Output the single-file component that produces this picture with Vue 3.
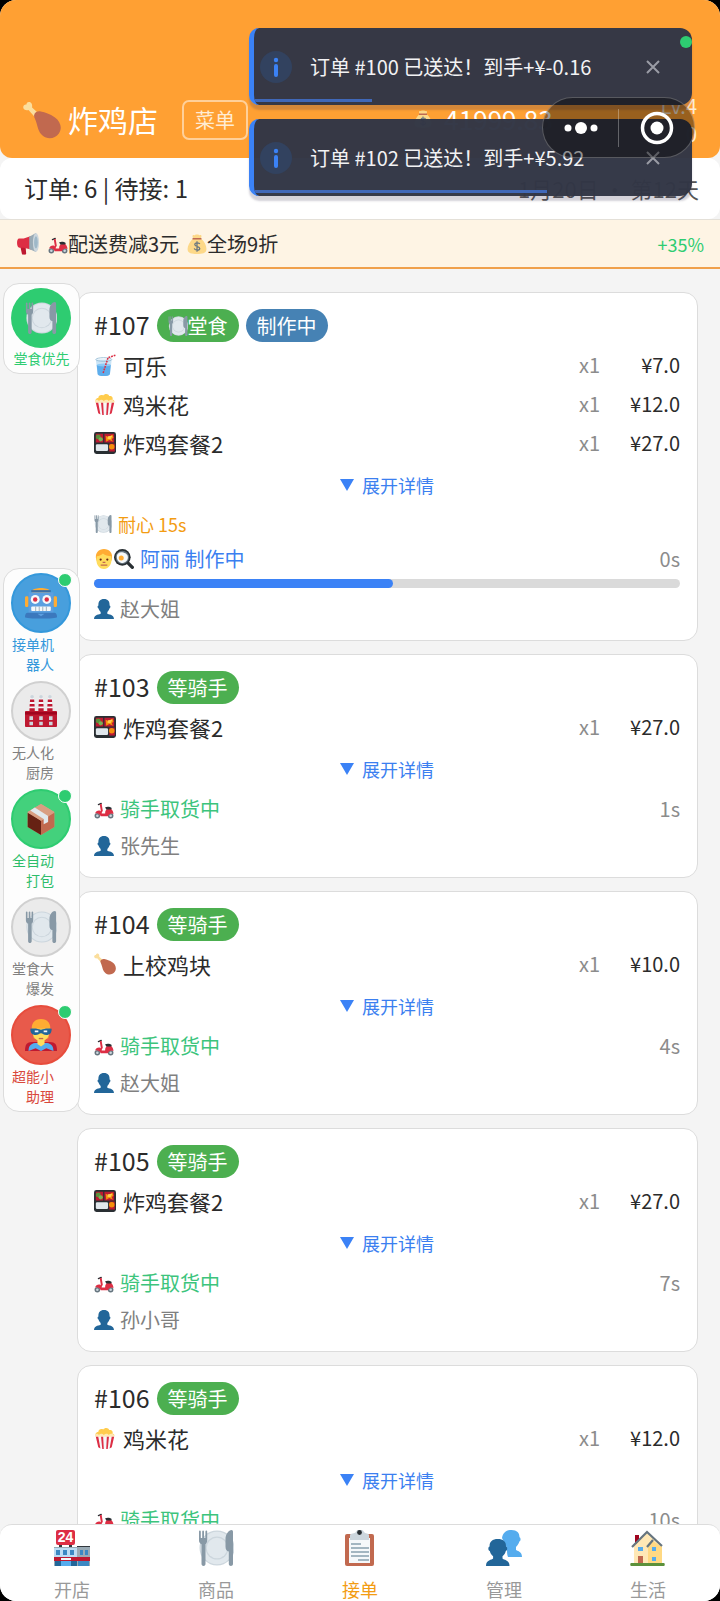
<style>
body {
  background: #000;
}
</style>
<template>
  <div class="screen">
    <svg class="sprite" aria-hidden="true">
      <symbol id="i-drumstick" viewBox="0 0 36 36">
        <path
          fill="#FBDE9D"
          d="M15 12 8.600 6.200C9 4 8.400 1.500 6.300 1 4.200.600 3.200 2 3.300 3.400 1.800 3 .300 4 .200 5.900c0 2.300 2.600 3.400 5 2.700L12 16z"
        />
        <path
          fill="#C1694F"
          d="M10.500 13.500c.400-2.600 3.500-4.300 6.300-3.600 4.400 1 8.600 2.200 13.200 5.400 6 4.200 7.300 10.700 4 15.500-3.400 5-10.700 6.200-15.500 2-4.200-3.700-4.400-8.300-6.500-14.300-.700-1.900-1.700-3.400-1.500-5z"
        />
      </symbol>
      <symbol id="i-plate" viewBox="0 0 36 36">
        <circle cx="19" cy="18" r="17.500" fill="#CCD6DD" />
        <circle cx="19" cy="18" r="16.300" fill="#E1E8ED" />
        <circle cx="19" cy="18" r="11.500" fill="#CCD6DD" />
        <circle cx="19" cy="18" r="10.300" fill="#E1E8ED" />
        <path
          fill="#8899A6"
          d="M1 1.500c0-1.200 1.800-1.200 1.800 0V8h1.400V1.500c0-1.200 1.800-1.200 1.800 0V8h1.400V1.500c0-1.200 1.800-1.200 1.800 0V10c0 2-.600 3.500-1.700 4.200V34c0 2.600-4 2.600-4 0V14.200C1.600 13.500 1 12 1 10zM35 2v32c0 2.600-4.200 2.600-4.200 0V21.500c-2.200-.500-3.300-2-3.300-5V9c0-5 3.500-9 6-9 1 0 1.500.800 1.500 2z"
        />
      </symbol>
      <symbol id="i-megaphone" viewBox="0 0 36 36">
        <path fill="#BE1931" d="M5 20h9l1 14c0 2-7 2-7 0z" />
        <path fill="#DD2E44" d="M3 9h8l12-4v22l-12-3H4c-5 0-5-15-1-15z" />
        <path fill="#99AAB5" d="M20 6 31 0v31l-11-5z" />
        <ellipse cx="31" cy="15.500" rx="5" ry="15.500" fill="#CCD6DD" />
        <ellipse cx="31" cy="15.500" rx="3" ry="10" fill="#9FB8C8" />
      </symbol>
      <symbol id="i-scooter" viewBox="0 0 36 36">
        <circle cx="6" cy="30" r="5" fill="#66757F" />
        <circle cx="6" cy="30" r="2.300" fill="#CCD6DD" />
        <circle cx="30" cy="30" r="5" fill="#66757F" />
        <circle cx="30" cy="30" r="2.300" fill="#CCD6DD" />
        <path fill="none" stroke="#292F33" stroke-width="2.500" stroke-linecap="round" d="m8 10 5-2" />
        <path fill="none" stroke="#DD2E44" stroke-width="3.500" d="m12 9 2 12-3 5" />
        <path
          fill="#DD2E44"
          d="M2 26c1-4 5-6 9-5l3 5h6c0-5 2-8 5-8h6c3 3 4 6 4 9-4-2-8-1-10 4H12c-2-5-6-6-10-5z"
        />
        <path fill="#292F33" d="M20 15c4-2 9-1 12 1l-1 3H22z" />
      </symbol>
      <symbol id="i-money" viewBox="0 0 36 36">
        <path
          fill="#FDD888"
          d="M11 8C9 4 10 1 12 2c2 1 3-2 6-1 3-1 4 2 6 1s3 2 1 6c7 6 10 13 10 19 0 8-8 9-17 9S1 35 1 27C1 21 5 14 11 8z"
        />
        <path fill="#BF6952" d="M10 7h16v3H10z" />
        <path
          fill="none"
          stroke="#67757F"
          stroke-width="2.200"
          d="M23 18c-1-3-9-3-9 1s9 3 9 7-9 4-10 0M18 13v19"
        />
      </symbol>
      <symbol id="i-cup" viewBox="0 0 36 36">
        <path fill="#BDDDF4" d="M3 9h26l-3 24c-1 4-19 4-20 0z" opacity=".8" />
        <path fill="#5DADEC" d="M4.500 18h23L26 33c-1 4-19 4-20 0z" />
        <ellipse cx="16" cy="18" rx="11.500" ry="2.500" fill="#8CCAF7" />
        <ellipse cx="16" cy="9" rx="13" ry="3" fill="none" stroke="#9BBFD6" stroke-width="1.500" />
        <path
          fill="none"
          stroke="#DD2E44"
          stroke-width="2.500"
          stroke-dasharray="3 1.500"
          d="M15 31 23 6l12-4"
        />
      </symbol>
      <symbol id="i-popcorn" viewBox="0 0 36 36">
        <path
          fill="#FFCC4D"
          d="M3 15C1 11 4 8 7 8c0-4 5-6 8-4 3-4 9-3 10 1 4-1 7 3 5 6 4 0 4 4 2 6H4z"
        />
        <path fill="#FFE8B6" d="M2 12c2-2 5-1 6 1 3-3 6-2 8 0 3-3 7-2 8 0 3-3 8-2 9 1 0 3-2 4-4 4H6c-3 0-5-3-4-6z" />
        <path fill="#F5F8FA" d="M3 16h30l-4 17c-1 3-21 3-22 0z" />
        <path fill="#DD2E44" d="M3 16h4l3.500 19L7 33zM11.500 16h3.500l1 20-2.500-.200zM21 16h3.500l-2 19.800-2.500.200zM29 16h4l-4 17-3.500 2z" />
      </symbol>
      <symbol id="i-bento" viewBox="0 0 36 36">
        <rect width="36" height="36" rx="4" fill="#292F33" />
        <path fill="#BE1931" d="M3 3h12v14H3zM17 3h16v14H17z" />
        <circle cx="7" cy="8" r="4" fill="#5C913B" />
        <circle cx="11" cy="12" r="3.500" fill="#77B255" />
        <path fill="#F4900C" d="M19 6l5 2 6-4 2 5-3 3 2 4-6-3-5 3z" />
        <path fill="#FFCC4D" d="m23 7 7-1-3 6-5-1z" />
        <rect x="3" y="20" width="20" height="11" rx="2" fill="#E1E8ED" />
        <path fill="#BE1931" d="M25 19h9v13h-9z" />
        <circle cx="29" cy="24" r="4.500" fill="#F4900C" />
      </symbol>
      <symbol id="i-face" viewBox="0 0 36 36">
        <path fill="#FFAC33" d="M4 19C1 7 9 0 18 0s17 7 14 19c-1 4-3 4-4 1H8c-1 3-3 3-4-1z" />
        <path fill="#FFDC5D" d="M5 13c5 0 9-3 11-5 4 3 9 5 15 5 3 12-4 23-13 23S2 27 5 13z" />
        <path fill="#C1694F" d="M15.500 23h5v2h-5zM12 28h12v2H12z" />
        <circle cx="12" cy="19" r="2" fill="#662113" />
        <circle cx="24" cy="19" r="2" fill="#662113" />
      </symbol>
      <symbol id="i-pan" viewBox="0 0 36 36">
        <path stroke="#292F33" stroke-width="6" stroke-linecap="round" d="m25 25 8 8" />
        <circle cx="15" cy="15" r="15" fill="#292F33" />
        <circle cx="15" cy="15" r="12" fill="#66757F" />
        <path fill="#F5F8FA" d="M5 14c0-6 5-9 10-8s11 4 10 10-6 9-11 9-9-5-9-11z" />
        <circle cx="13" cy="16" r="4.500" fill="#FFAC33" />
      </symbol>
      <symbol id="i-user" viewBox="0 0 36 36">
        <path
          fill="#269"
          d="M24 26.500v-3.300c2.200-1.800 3.700-4.500 4-6.400 1.600 0 2.500-4.800 0-5C28.500 4 25 0 18 0S7.500 4 8 11.800c-2.500.200-1.600 5 0 5 .300 1.900 1.800 4.600 4 6.400v3.300C11 28 0 27 0 36h36c0-9-11-8-12-9.500z"
        />
      </symbol>
      <symbol id="i-robot" viewBox="0 0 36 36">
        <path fill="#FFAC33" d="M8 4c2-4 18-4 20 0v4H8zM0 12c0-2 4-2 4 0v9c0 2-4 2-4 0zM32 12c0-2 4-2 4 0v9c0 2-4 2-4 0z" />
        <path fill="#3B6FA8" d="M7 3.500h22V6H7z" />
        <path fill="#5C9FE0" d="M4 6h28v23H4z" />
        <path fill="#3B78BD" d="M3 29h30c2 0 3 2 3 5 0 2-36 2-36 0 0-3 1-5 3-5z" />
        <circle cx="11.500" cy="14" r="5" fill="#F5F8FA" />
        <circle cx="24.500" cy="14" r="5" fill="#F5F8FA" />
        <circle cx="11.500" cy="14" r="2.500" fill="#DD2E44" />
        <circle cx="24.500" cy="14" r="2.500" fill="#DD2E44" />
        <rect x="7" y="22" width="22" height="5" rx="1" fill="#F5F8FA" />
        <path stroke="#99AAB5" d="M12 22v5M16 22v5M20 22v5M24 22v5" />
        <path fill="#5C9FE0" d="m14 30 4 3 4-3z" />
      </symbol>
      <symbol id="i-factory" viewBox="0 0 36 36">
        <path fill="#F5F8FA" d="M6 3h4l1 15H5zM16 3h4l1 15h-6zM26 3h4l1 15h-6z" />
        <path
          fill="#BE1931"
          d="M5.700 5h4.600l.200 3h-5zM5.300 10h5.400l.200 3H5.100zM5 15h6v3H5zM15.700 5h4.600l.200 3h-5zM15.300 10h5.400l.200 3h-5.800zM15 15h6v3h-6zM25.700 5h4.600l.200 3h-5zM25.300 10h5.400l.200 3h-5.800zM25 15h6v3h-6z"
        />
        <g fill="#CCD6DD">
          <circle cx="8" cy="2" r="2" />
          <circle cx="18" cy="2" r="2" />
          <circle cx="28" cy="2" r="2" />
        </g>
        <rect y="18" width="36" height="18" rx="1" fill="#BE1931" />
        <path fill="#A0041E" d="M0 19h36v3H0z" />
        <path
          fill="#CCD6DD"
          d="M5 24h4v4H5zM16 24h4v4h-4zM27 24h4v4h-4zM5 30h4v4H5zM16 30h4v4h-4zM27 30h4v4h-4z"
        />
      </symbol>
      <symbol id="i-box" viewBox="0 0 36 36">
        <path fill="#D99E82" d="m18 1 15 9v17L18 36 3 27V10z" />
        <path fill="#662113" d="m3 11 15 9v16L3 27z" />
        <path fill="#C1694F" d="M18 20 33 11v16l-15 9z" />
        <path fill="#D99E82" d="M18 1 3 10l15 10 15-10z" />
        <path fill="#E1E8ED" d="m11 5 15 9.500v7l-5 2.500v-6L6 8.500z" />
      </symbol>
      <symbol id="i-hero" viewBox="0 0 36 36">
        <path fill="#BE1931" d="M0 36c0-7 2-10 8-10h20c6 0 8 3 8 10z" />
        <path fill="#55ACEE" d="M4 36c0-7 4-9 9-9h10c5 0 9 2 9 9l-8-3-6 3-6-3z" />
        <path fill="#FFAC33" d="M8 14C6 5 11 0 18 0s12 5 10 14l-2 8H10z" />
        <path fill="#FFDC5D" d="M9 11h18c1 6-1 11-5 13v4l-4 3-4-3v-4c-4-2-6-7-5-13z" />
        <path fill="#226699" d="M6 11c6-1 8 0 12 1 4-1 6-2 12-1 0 5-2 7-6 7-3 0-4-2-6-2s-3 2-6 2c-4 0-6-2-6-7z" />
        <path fill="#F5F8FA" d="M11 13h4v2h-4zM21 13h4v2h-4z" />
        <path stroke="#C1694F" stroke-width="1.500" d="M15.500 22h5" />
      </symbol>
      <symbol id="i-store" viewBox="0 0 36 36">
        <path fill="#31373D" d="M5 13h3v4H5zM15 13h3v4h-3zM23 16h13v3H23z" />
        <rect x="2" width="19" height="15" rx="2" fill="#DD2E44" />
        <text x="11.500" y="12" text-anchor="middle" class="store-sign">24</text>
        <path fill="#99AAB5" d="M0 17h36v19H0z" />
        <path fill="#BDDDF4" d="M0 18h23v9H0z" />
        <path fill="#3B88C3" d="M2 20h4v5H2zM9 20h4v5H9zM16 20h4v5h-4zM26 20h3v5h-3zM31 20h3v5h-3zM24 30h11v6H24z" />
        <path fill="#BE1931" d="M0 27h36v4H0z" />
        <path fill="#F5F8FA" d="M7 28h10v2H7z" />
        <path fill="#55ACEE" d="M1 31h22v5H1z" />
        <path fill="#269" d="M1 31h6v5H1zM17 31h6v5h-6z" />
      </symbol>
      <symbol id="i-clipboard" viewBox="0 0 36 36">
        <rect x="3" y="4" width="29" height="32" rx="2" fill="#C1694F" />
        <path fill="#F5F8FA" d="M7 8h21v25H7z" />
        <path fill="#CCD6DD" d="M8 10V5c0-2 5-1 6-3 1-3 7-3 8 0 1 2 5 1 5 3v5z" />
        <circle cx="17.500" cy="2.500" r="2.400" fill="#292F33" />
        <path stroke="#88A0AE" stroke-width="1.700" d="M9 14h10M9 18h18M9 22h18M9 26h18M16 30h11" />
      </symbol>
      <symbol id="i-users" viewBox="0 0 36 36">
        <path
          fill="#55ACEE"
          d="M30 20v-3c2-2 3-4 3.300-5.500 1.600 0 1.700-4 .200-4.300C33.500 3 31 0 25.500 0S17 3 16 8l5 10c0 4 0 7 1 9h14c0-6-5-6-6-7z"
        />
        <path
          fill="#269"
          d="M16.500 28.500v-2.300c1.900-1.400 3-3.400 3.300-5.200 1.700 0 2-4.200.200-4.500.300-5-3-7.500-8.200-7.500S3.300 11.500 3.600 16.500c-1.800.300-1.500 4.500.200 4.500.300 1.800 1.400 3.800 3.300 5.200v2.300C6 30 0 29.500 0 36h23.500c0-6.500-6-6-7-7.500z"
        />
      </symbol>
      <symbol id="i-house" viewBox="0 0 36 36">
        <path fill="#A0041E" d="M5 5h4v9H5z" />
        <path fill="#FFE8B6" d="M4 16 17 3l15 13v17H4z" />
        <path fill="#FFD983" d="M18 17l5-6 9 6v16H18z" />
        <path fill="none" stroke="#66757F" stroke-width="2.200" d="M2 17 17 2l15 14M17 17l6-7" />
        <path fill="#55ACEE" d="M8 17h5v4H8zM22 17h4v4h-4zM22 27h4v4h-4z" />
        <path fill="#C1694F" d="M8 26h5v7H8z" />
        <path fill="#5C913B" d="M1 33h33c1 0 1 3 0 3H1c-1 0-1-3 0-3z" />
      </symbol>
    </svg>

    <header class="topbar">
      <svg class="shop-icon"><use href="#i-drumstick" /></svg>
      <h1>炸鸡店</h1>
      <button class="menu-btn" type="button">菜单</button>
      <div class="balance">
        <svg class="icon-18"><use href="#i-money" /></svg>
        <span>41999.83</span>
      </div>
      <div class="level">
        <span>Lv.4</span>
        <span>0</span>
      </div>
    </header>

    <section class="summary">
      <span>订单: 6 | 待接: 1</span>
      <span class="date">1月20日 · 第12天</span>
    </section>

    <section class="promo">
      <svg class="icon-24"><use href="#i-megaphone" /></svg>
      <span class="promo-item"><svg class="icon-20"><use href="#i-scooter" /></svg>配送费减3元</span>
      <span class="promo-item"><svg class="icon-20"><use href="#i-money" /></svg>全场9折</span>
      <span class="promo-rate">+35%</span>
    </section>

    <main>
      <div class="order-list">
        <article v-for="order in orders" :key="order.id" class="card">
          <div class="card-head">
            <h2>#{{ order.id }}</h2>
            <span v-if="order.dineIn" class="badge green">
              <svg class="icon-20"><use href="#i-plate" /></svg>堂食
            </span>
            <span class="badge" :class="order.dineIn ? 'blue' : 'green'">{{ order.status }}</span>
          </div>
          <ul class="items">
            <li v-for="item in order.items" :key="item.name">
              <svg class="icon-22"><use :href="`#i-${item.icon}`" /></svg>
              <span class="item-name">{{ item.name }}</span>
              <span class="qty">x1</span>
              <span class="price">{{ formatPrice(item.price) }}</span>
            </li>
          </ul>
          <button class="expand" type="button"><i class="triangle"></i>展开详情</button>
          <template v-if="order.dineIn">
            <div class="row patience">
              <svg class="icon-18"><use href="#i-plate" /></svg>耐心 {{ order.patience }}s
            </div>
            <div class="row cooking">
              <span class="chef">
                <svg class="icon-20"><use href="#i-face" /></svg>
                <svg class="icon-20"><use href="#i-pan" /></svg>
              </span>
              {{ order.chef }} 制作中
              <span class="seconds">{{ order.seconds }}s</span>
            </div>
            <div class="track" role="progressbar" aria-label="制作进度" :aria-valuenow="order.progress">
              <div class="fill" :style="{ width: order.progress + '%' }"></div>
            </div>
          </template>
          <div v-else class="row rider">
            <svg class="icon-20"><use href="#i-scooter" /></svg>骑手取货中
            <span class="seconds">{{ order.seconds }}s</span>
          </div>
          <div class="row customer">
            <svg class="icon-20"><use href="#i-user" /></svg>{{ order.customer }}
          </div>
        </article>
      </div>

      <aside class="panel panel-top">
        <button class="tool tone-green" type="button">
          <span class="disc"><svg class="icon-32"><use href="#i-plate" /></svg></span>
          <span class="tool-label">堂食优先</span>
        </button>
      </aside>
      <aside class="panel panel-tools">
        <button
          v-for="tool in tools"
          :key="tool.icon"
          class="tool two-line"
          :class="`tone-${tool.tone}`"
          type="button"
        >
          <span class="disc"><svg class="icon-32"><use :href="`#i-${tool.icon}`" /></svg></span>
          <span v-if="tool.tone !== 'off'" class="dot"></span>
          <span class="tool-label">{{ tool.label[0] }}<br />{{ tool.label[1] }}</span>
        </button>
      </aside>
    </main>

    <nav>
      <a v-for="tab in tabs" :key="tab.label" href="#" :class="{ active: tab.label === activeTab }">
        <svg class="icon-36"><use :href="`#i-${tab.icon}`" /></svg>
        {{ tab.label }}
      </a>
    </nav>

    <div class="toasts">
      <div v-for="toast in toasts" :key="toast.id" class="toast" role="status">
        <svg class="toast-info" viewBox="0 0 32 32">
          <circle cx="16" cy="16" r="16" fill="#32425f" />
          <circle cx="16" cy="9" r="2.200" fill="#3b82f6" />
          <path stroke="#3b82f6" stroke-width="4" stroke-linecap="round" d="M16 15v9" />
        </svg>
        <span class="toast-text">订单 #{{ toast.id }} 已送达！到手+¥{{ toast.income }}</span>
        <button class="toast-close" type="button" aria-label="关闭">
          <svg viewBox="0 0 14 14"><path d="m1 1 12 12M13 1 1 13" /></svg>
        </button>
        <div class="toast-bar" :style="{ width: toast.left + '%' }"></div>
      </div>
      <span class="online"></span>
    </div>

    <div class="capsule">
      <button type="button" aria-label="更多">
        <svg width="34" height="34" viewBox="0 0 34 34" fill="#fff">
          <circle cx="4" cy="17" r="3.500" />
          <circle cx="17" cy="17" r="6" />
          <circle cx="30" cy="17" r="3.500" />
        </svg>
      </button>
      <button type="button" aria-label="关闭小程序">
        <svg width="34" height="34" viewBox="0 0 34 34">
          <circle cx="17" cy="17" r="14.500" fill="none" stroke="#fff" stroke-width="3.500" />
          <circle cx="17" cy="17" r="6.500" fill="#fff" />
        </svg>
      </button>
    </div>
  </div>
</template>

<script setup>
import { ref } from 'vue'

const combo = { icon: 'bento', name: '炸鸡套餐2', price: 27 }
const popcorn = { icon: 'popcorn', name: '鸡米花', price: 12 }

const orders = ref([
  {
    id: 107,
    dineIn: true,
    status: '制作中',
    items: [{ icon: 'cup', name: '可乐', price: 7 }, popcorn, combo],
    patience: 15,
    chef: '阿丽',
    progress: 51,
    seconds: 0,
    customer: '赵大姐',
  },
  { id: 103, status: '等骑手', items: [combo], seconds: 1, customer: '张先生' },
  {
    id: 104,
    status: '等骑手',
    items: [{ icon: 'drumstick', name: '上校鸡块', price: 10 }],
    seconds: 4,
    customer: '赵大姐',
  },
  { id: 105, status: '等骑手', items: [combo], seconds: 7, customer: '孙小哥' },
  { id: 106, status: '等骑手', items: [popcorn], seconds: 10, customer: '张先生' },
])

const tools = [
  { icon: 'robot', label: ['接单机', '器人'], tone: 'blue' },
  { icon: 'factory', label: ['无人化', '厨房'], tone: 'off' },
  { icon: 'box', label: ['全自动', '打包'], tone: 'mint' },
  { icon: 'plate', label: ['堂食大', '爆发'], tone: 'off' },
  { icon: 'hero', label: ['超能小', '助理'], tone: 'red' },
]

const tabs = [
  { icon: 'store', label: '开店' },
  { icon: 'plate', label: '商品' },
  { icon: 'clipboard', label: '接单' },
  { icon: 'users', label: '管理' },
  { icon: 'house', label: '生活' },
]
const activeTab = ref('接单')

const toasts = ref([
  { id: 100, income: '-0.16', left: 27 },
  { id: 102, income: '5.92', left: 67 },
])

const formatPrice = (value) => `¥${value.toFixed(1)}`
</script>

<style scoped>
.screen {
  position: relative;
  display: flex;
  flex-direction: column;
  height: 100vh;
  overflow: hidden;
  border-radius: 16px;
  background: #f4f4f4;
  color: #2b2b2b;
  font-family: 'Noto Sans CJK SC', 'Noto Sans', sans-serif;
  font-size: 20px;
  line-height: 28px;
}
.sprite {
  display: none;
}
.store-sign {
  font: bold 14px 'Liberation Sans', sans-serif;
  fill: #fff;
}
button {
  padding: 0;
  border: 0;
  background: none;
  color: inherit;
  font: inherit;
}
svg {
  display: block;
  flex: none;
}
.icon-18 {
  width: 18px;
  height: 18px;
}
.icon-20 {
  width: 20px;
  height: 20px;
}
.icon-22 {
  width: 22px;
  height: 22px;
}
.icon-24 {
  width: 24px;
  height: 22px;
}
.icon-32 {
  width: 32px;
  height: 32px;
}
.icon-36 {
  width: 36px;
  height: 36px;
}

/* header */
.topbar {
  display: flex;
  align-items: center;
  padding: 92px 23px 10px;
  min-height: 56px;
  border-radius: 0 0 12px 12px;
  background: #ffa033;
  color: #fff;
}
.shop-icon {
  width: 38px;
  height: 38px;
}
h1 {
  margin: 0 24px 0 7px;
  padding-bottom: 3px;
  font-size: 30px;
  font-weight: 400;
}
.menu-btn {
  padding: 4px 11px;
  border: 2px solid #ffd09a;
  border-radius: 7px;
  color: #ffecd4;
}
.balance {
  display: flex;
  align-items: center;
  gap: 12px;
  margin-left: auto;
  padding-bottom: 3px;
  font-size: 26px;
}
.level {
  display: flex;
  flex-direction: column;
  margin-left: 108px;
  text-align: right;
  color: #ffecd4;
}
.summary {
  display: flex;
  align-items: center;
  justify-content: space-between;
  box-sizing: border-box;
  padding: 0 21px 2px 24px;
  height: 61px;
  border-radius: 12px;
  background: #fff;
  font-size: 24px;
}
.date {
  color: #555;
  font-size: 22px;
}
.promo {
  display: flex;
  align-items: center;
  gap: 8px;
  padding: 0 16px;
  height: 47px;
  border-top: 1px solid #e4e0d8;
  border-bottom: 2px solid #f0a04b;
  background: #fef4e4;
}
.promo-item {
  display: flex;
  align-items: center;
}
.promo-rate {
  margin-left: auto;
  color: #2ecc71;
  font-size: 18px;
}

/* orders */
main {
  position: relative;
  flex: 1;
  min-height: 0;
  overflow: hidden;
}
.order-list {
  display: flex;
  flex-direction: column;
  gap: 13px;
  padding: 23px 22px 0 77px;
}
.card {
  padding: 16px 17px 13px 16px;
  border: 1px solid #dcdcdc;
  border-radius: 14px;
  background: #fff;
}
.card-head {
  display: flex;
  align-items: center;
  gap: 7px;
  height: 33px;
  margin-bottom: 5px;
}
h2 {
  margin: 0;
  padding-bottom: 3px;
  font-size: 25px;
  font-weight: 400;
}
.badge {
  display: flex;
  align-items: center;
  padding: 0 11px;
  height: 33px;
  border-radius: 17px;
  color: #fff;
}
.green {
  background: #4caf50;
}
.blue {
  background: #4682b4;
}
.items {
  margin: 0;
  padding: 0;
  list-style: none;
}
.items li {
  display: flex;
  align-items: center;
  box-sizing: border-box;
  height: 39px;
  padding-bottom: 3px;
}
.item-name {
  flex: 1;
  margin-left: 7px;
  font-size: 22px;
}
.qty {
  color: #8c8c8c;
}
.price {
  width: 80px;
  text-align: right;
}
.expand {
  display: flex;
  align-items: center;
  justify-content: center;
  gap: 8px;
  width: 100%;
  height: 42px;
  color: #3b7ff0;
  font-size: 18px;
}
.triangle {
  border: 7px solid transparent;
  border-top: 12px solid #3b82f6;
  border-bottom: 0;
}
.row {
  display: flex;
  align-items: center;
  gap: 6px;
  height: 36px;
}
.rider {
  margin-top: 1px;
  margin-bottom: 1px;
  color: #3cc47c;
}
.patience {
  margin-top: 1px;
  margin-bottom: 1px;
  height: 33px;
  color: #f39c12;
  font-size: 18px;
}
.cooking {
  color: #3b7ff0;
}
.chef {
  display: flex;
}
.customer {
  color: #808080;
}
.seconds {
  margin-left: auto;
  color: #8c8c8c;
}
.track {
  height: 9px;
  margin: 2px 0 3px;
  border-radius: 5px;
  background: #dadada;
}
.fill {
  height: 100%;
  border-radius: 5px;
  background: #3b82f6;
}

/* floating tools */
.panel {
  position: absolute;
  left: 3px;
  display: flex;
  flex-direction: column;
  gap: 7px;
  padding: 4px 7px 5px;
  border: 1px solid #dcdcdc;
  border-radius: 16px;
  background: #fdfdfd;
}
.panel-top {
  top: 14px;
}
.panel-tools {
  top: 299px;
}
.tool {
  position: relative;
  width: 61px;
  font-size: 14px;
  line-height: 20px;
}
.disc {
  display: flex;
  align-items: center;
  justify-content: center;
  box-sizing: border-box;
  height: 60px;
  width: 60px;
  border: 2px solid transparent;
  border-radius: 50%;
}
.tool-label {
  display: block;
}
.two-line .tool-label {
  margin-top: 1px;
  padding-right: 18px;
  text-align: right;
}
.dot {
  position: absolute;
  top: 0;
  right: 0;
  width: 12px;
  height: 12px;
  border: 1px solid #fff;
  border-radius: 50%;
  background: #2ecc71;
}
.tone-green {
  color: #2ecc71;
}
.tone-green .disc {
  background: #2ecc71;
}
.tone-mint {
  color: #2ebd6b;
}
.tone-mint .disc {
  border-color: #2ecc71;
  background: #43d17c;
}
.tone-blue {
  color: #3498db;
}
.tone-blue .disc {
  border-color: #3498db;
  background: #489fdd;
}
.tone-red {
  color: #d9483b;
}
.tone-red .disc {
  border-color: #e74c3c;
  background: #e85a4b;
}
.tone-off {
  color: #808080;
}
.tone-off .disc {
  border-color: #d0d0d0;
  background: #ebebeb;
}

nav {
  display: flex;
  height: 76px;
  border-top: 1px solid #dcdcdc;
  border-radius: 12px 12px 0 0;
  background: #fff;
}
nav a {
  display: flex;
  flex: 1;
  flex-direction: column;
  align-items: center;
  gap: 9px;
  padding-top: 5px;
  color: #999;
  font-size: 18px;
  text-decoration: none;
}
nav a.active {
  color: #f39c12;
}

/* overlays */
.toasts {
  position: absolute;
  top: 28px;
  right: 28px;
  display: flex;
  flex-direction: column;
  gap: 14px;
  width: 443px;
}
.toast {
  position: relative;
  display: flex;
  align-items: center;
  box-sizing: border-box;
  height: 77px;
  padding: 0 32px 0 6px;
  overflow: hidden;
  border-left: 5px solid #3b82f6;
  border-radius: 10px 12px 12px 10px;
  background: rgba(50, 54, 69, 0.98);
  box-shadow: 0 5px 2px rgba(60, 50, 80, 0.22);
  color: #f2f2f4;
}
.toast-info {
  width: 32px;
  height: 32px;
}
.toast-text {
  flex: 1;
  margin-left: 18px;
}
.toast-close svg {
  width: 14px;
  height: 14px;
  fill: none;
  stroke: #9a9ca5;
  stroke-width: 2;
}
.toast-bar {
  position: absolute;
  bottom: 3px;
  left: 0;
  height: 3px;
  background: #4068b8;
}
.online {
  position: absolute;
  top: 8px;
  right: 0;
  width: 12px;
  height: 12px;
  border-radius: 50%;
  background: #2ecc71;
}
.capsule {
  position: absolute;
  top: 97px;
  right: 25px;
  display: flex;
  align-items: center;
  box-sizing: border-box;
  width: 153px;
  height: 61px;
  border: 1px solid rgba(255, 255, 255, 0.25);
  border-radius: 31px;
  background: rgba(0, 0, 0, 0.4);
}
.capsule button {
  display: flex;
  flex: 1;
  align-items: center;
  justify-content: center;
  height: 38px;
}
.capsule button + button {
  border-left: 1px solid rgba(255, 255, 255, 0.3);
}
</style>
